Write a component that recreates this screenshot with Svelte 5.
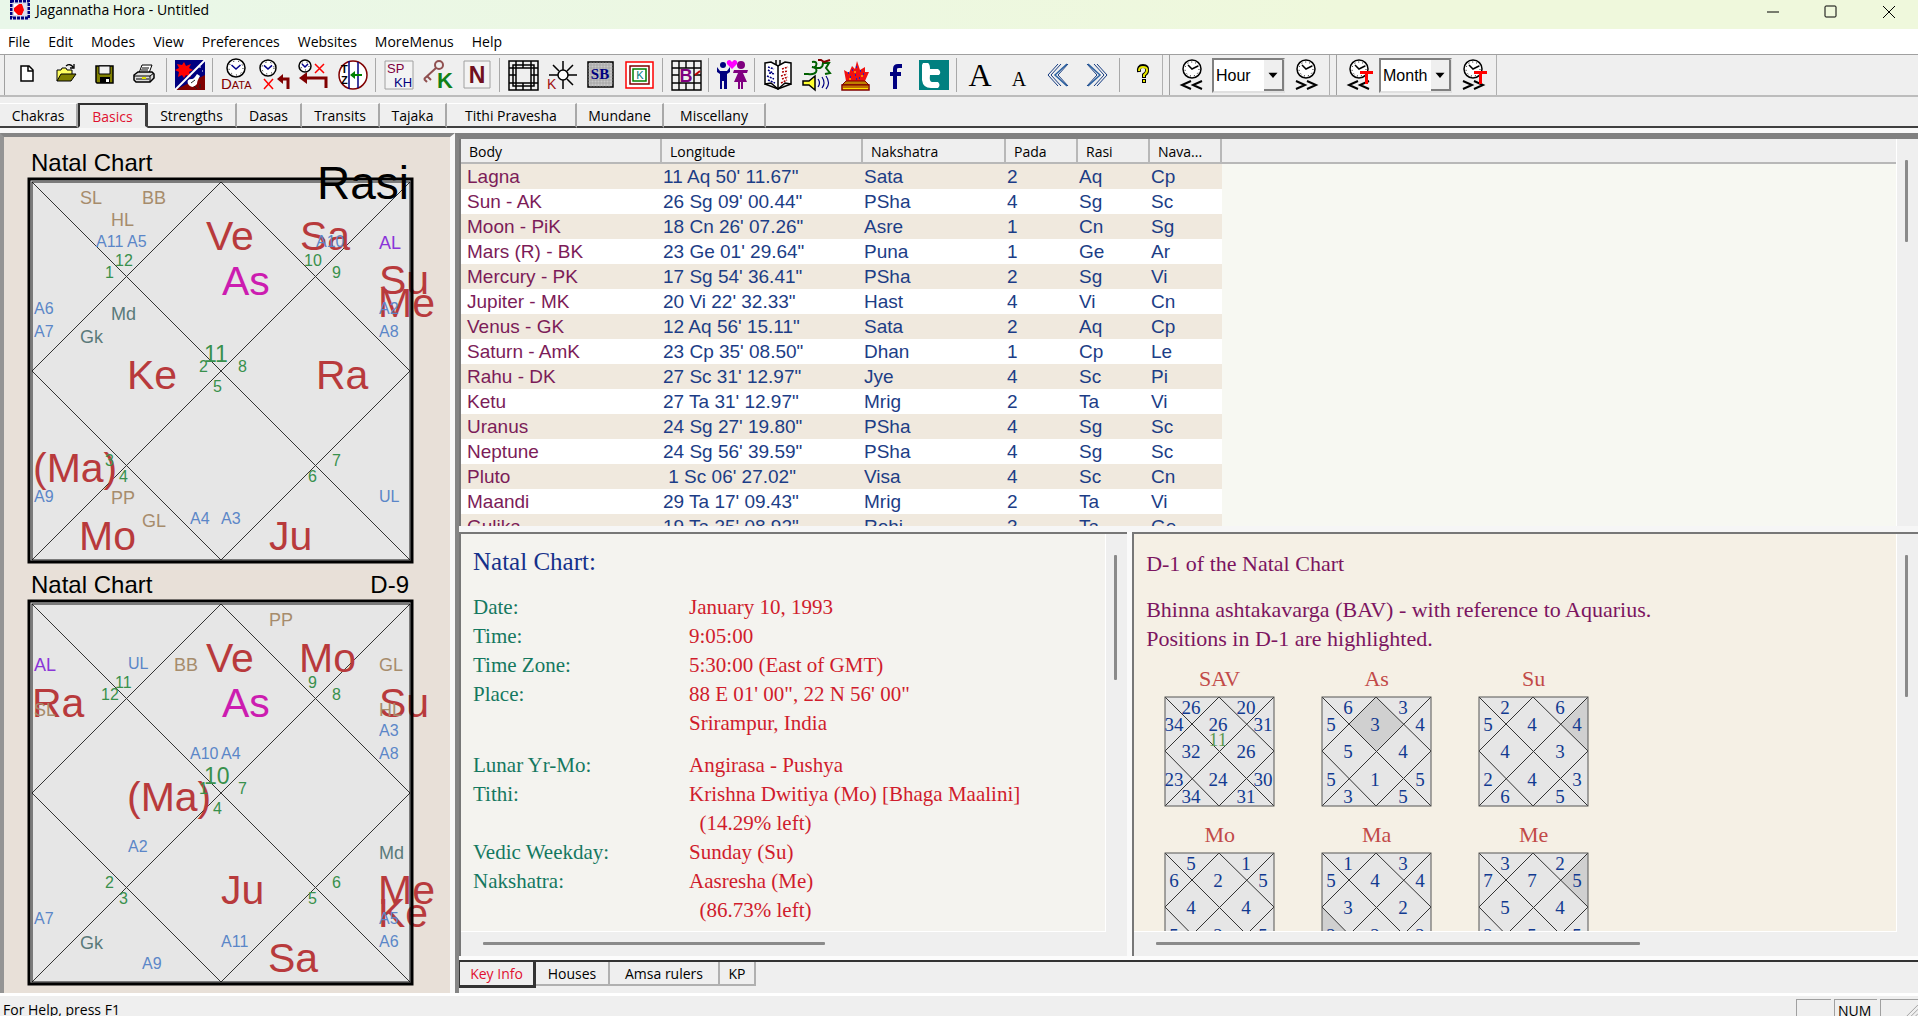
<script>
  const menus = ["File", "Edit", "Modes", "View", "Preferences", "Websites", "MoreMenus", "Help"];

  const toolGroups = [
    ["new", "open", "save", "print"],
    ["panchang"],
    ["data", "clock-undo", "clock-back", "timezone"],
    ["spkh", "key", "news"],
    ["grid", "sunk", "sb", "kota"],
    ["bcell"],
    ["couple"],
    ["book", "mantra", "homa", "facebook", "twitter"],
    ["bigger", "smaller", "prev", "next"],
    ["help"],
  ];

  const steppers = [
    { unit: "Hour", transit: false },
    { unit: "Month", transit: true },
  ];

  const tabs = [
    { name: "Chakras", width: 78 },
    { name: "Basics", width: 70 },
    { name: "Strengths", width: 89 },
    { name: "Dasas", width: 65 },
    { name: "Transits", width: 78 },
    { name: "Tajaka", width: 67 },
    { name: "Tithi Pravesha", width: 130 },
    { name: "Mundane", width: 87 },
    { name: "Miscellany", width: 102 },
  ];
  let activeTab = $state("Basics");

  const infoTabs = [
    { name: "Key Info", width: 77 },
    { name: "Houses", width: 74 },
    { name: "Amsa rulers", width: 110 },
    { name: "KP", width: 36 },
  ];
  let activeInfo = $state("Key Info");

  // kinds: p planet, s special lagna, a arudha, u upagraha, al, as, n house number, c centre number
  const rasi = {
    title: "Natal Chart",
    label: "Rasi",
    marks: [
      ["s", "SL", 52, 26], ["s", "BB", 114, 26], ["s", "HL", 83, 48],
      ["u", "Md", 83, 142], ["u", "Gk", 52, 165],
      ["s", "PP", 83, 326], ["s", "GL", 114, 349], ["al", "AL", 351, 71],
      ["p", "Ve", 178, 72], ["as", "As", 194, 117], ["p", "Sa", 272, 72],
      ["p", "Su", 351, 116], ["p", "Me", 350, 139],
      ["p", "Ke", 99, 211], ["p", "Ra", 288, 211],
      ["p", "(Ma)", 5, 304], ["p", "Mo", 51, 372], ["p", "Ju", 241, 372],
      ["a", "A11", 68, 69], ["a", "A5", 99, 69], ["a", "A10", 288, 69],
      ["a", "A6", 6, 136], ["a", "A7", 6, 159], ["a", "A2", 351, 136], ["a", "A8", 351, 159],
      ["a", "A9", 6, 324], ["a", "A4", 162, 346], ["a", "A3", 193, 346], ["a", "UL", 351, 324],
      ["n", "12", 87, 88], ["n", "1", 77, 100], ["n", "10", 276, 88], ["n", "9", 304, 100],
      ["n", "2", 171, 194], ["c", "11", 176, 184], ["n", "8", 210, 194], ["n", "5", 185, 214],
      ["n", "3", 77, 288], ["n", "4", 91, 304], ["n", "6", 280, 304], ["n", "7", 304, 288],
    ],
  };

  const navamsa = {
    title: "Natal Chart",
    label: "D-9",
    marks: [
      ["s", "PP", 241, 26], ["s", "BB", 146, 71], ["s", "GL", 351, 71],
      ["al", "AL", 6, 71], ["u", "Md", 351, 259], ["u", "Gk", 52, 349],
      ["p", "Ve", 178, 72], ["as", "As", 194, 117], ["p", "Mo", 271, 72],
      ["p", "Ra", 4, 117], ["p", "Su", 351, 117], ["s", "SL", 6, 116], ["s", "HL", 351, 116],
      ["p", "(Ma)", 99, 211], ["p", "Ju", 193, 304], ["p", "Me", 350, 304],
      ["p", "Ke", 350, 327], ["p", "Sa", 240, 372],
      ["a", "UL", 100, 69], ["a", "A3", 351, 136], ["a", "A8", 351, 159],
      ["a", "A10", 162, 159], ["a", "A4", 193, 159], ["a", "A2", 100, 252],
      ["a", "A5", 351, 324], ["a", "A6", 351, 347], ["a", "A7", 6, 324],
      ["a", "A11", 193, 347], ["a", "A9", 114, 369],
      ["n", "12", 73, 100], ["n", "11", 87, 88], ["n", "9", 280, 88], ["n", "8", 304, 100],
      ["n", "1", 171, 194], ["c", "10", 176, 184], ["n", "7", 210, 194], ["n", "4", 185, 214],
      ["n", "2", 77, 288], ["n", "3", 91, 304], ["n", "5", 280, 304], ["n", "6", 304, 288],
    ],
  };

  const columns = ["Body", "Longitude", "Nakshatra", "Pada", "Rasi", "Nava..."];
  const bodies = [
    ["Lagna", "11 Aq 50' 11.67\"", "Sata", "2", "Aq", "Cp"],
    ["Sun - AK", "26 Sg 09' 00.44\"", "PSha", "4", "Sg", "Sc"],
    ["Moon - PiK", "18 Cn 26' 07.26\"", "Asre", "1", "Cn", "Sg"],
    ["Mars (R) - BK", "23 Ge 01' 29.64\"", "Puna", "1", "Ge", "Ar"],
    ["Mercury - PK", "17 Sg 54' 36.41\"", "PSha", "2", "Sg", "Vi"],
    ["Jupiter - MK", "20 Vi 22' 32.33\"", "Hast", "4", "Vi", "Cn"],
    ["Venus - GK", "12 Aq 56' 15.11\"", "Sata", "2", "Aq", "Cp"],
    ["Saturn - AmK", "23 Cp 35' 08.50\"", "Dhan", "1", "Cp", "Le"],
    ["Rahu - DK", "27 Sc 31' 12.97\"", "Jye", "4", "Sc", "Pi"],
    ["Ketu", "27 Ta 31' 12.97\"", "Mrig", "2", "Ta", "Vi"],
    ["Uranus", "24 Sg 27' 19.80\"", "PSha", "4", "Sg", "Sc"],
    ["Neptune", "24 Sg 56' 39.59\"", "PSha", "4", "Sg", "Sc"],
    ["Pluto", " 1 Sc 06' 27.02\"", "Visa", "4", "Sc", "Cn"],
    ["Maandi", "29 Ta 17' 09.43\"", "Mrig", "2", "Ta", "Vi"],
    ["Gulika", "19 Ta 35' 08.92\"", "Rohi", "3", "Ta", "Ge"],
  ];

  const birth = [
    ["Date:", "January 10, 1993"],
    ["Time:", "9:05:00"],
    ["Time Zone:", "5:30:00 (East of GMT)"],
    ["Place:", "88 E 01' 00\", 22 N 56' 00\""],
    ["", "Srirampur, India"],
  ];
  const panchanga = [
    ["Lunar Yr-Mo:", "Angirasa - Pushya"],
    ["Tithi:", "Krishna Dwitiya (Mo) [Bhaga Maalini]"],
    ["", "  (14.29% left)"],
    ["Vedic Weekday:", "Sunday (Su)"],
    ["Nakshatra:", "Aasresha (Me)"],
    ["", "  (86.73% left)"],
    ["Yoga:", "Priti (Me) (33.41% left)"],
  ];

  // centre points of the twelve houses in a 111px box, first house on top, then anticlockwise
  const houseSpots = [
    [54, 28], [27, 11], [10, 28], [27, 55], [10, 83], [27, 100],
    [54, 83], [82, 100], [99, 83], [82, 55], [99, 28], [82, 11],
  ];
  const houseShapes = {
    1: "55,1 83,28 55,55 28,28",
    5: "1,55 28,83 1,110",
    11: "110,1 110,55 83,28",
  };
  const vargas = [
    { name: "SAV", values: [26, 26, 34, 32, 23, 34, 24, 31, 30, 26, 31, 20], sign: 11 },
    { name: "As", values: [3, 6, 5, 5, 5, 3, 1, 5, 5, 4, 4, 3], lit: 1 },
    { name: "Su", values: [4, 2, 5, 4, 2, 6, 4, 5, 3, 3, 4, 6], lit: 11 },
    { name: "Mo", values: [2, 5, 6, 4, 5, 4, 2, 4, 5, 4, 5, 1] },
    { name: "Ma", values: [4, 1, 5, 3, 2, 4, 2, 3, 2, 2, 4, 3], lit: 5 },
    { name: "Me", values: [7, 3, 7, 5, 2, 5, 5, 4, 5, 4, 5, 2], lit: 11 },
  ];
</script>

{#snippet clock(cx, cy, r)}
  <circle {cx} {cy} {r} fill="#fff" stroke="#000" stroke-width="1.5" />
  <circle {cx} {cy} r={r - 2} fill="none" stroke="#000" stroke-width="1" stroke-dasharray="1 4" />
  <path d="M{cx - r / 2} {cy - r / 3}L{cx} {cy + 1}L{cx + r / 2} {cy - r / 3}" fill="none" stroke="#00008b" stroke-width="1.5" />
{/snippet}

{#snippet icon(name)}
  <svg class="icon" viewBox="0 0 32 32" aria-hidden="true">
    {#if name === "new"}
      <path d="M10 7h8l4 4v11H10z" fill="#fff" stroke="#000" stroke-width="1.5" />
      <path d="M17 7v5h5" fill="none" stroke="#000" stroke-width="1.5" />
    {:else if name === "open"}
      <path d="M7 22V11h4l1-2h4l1 2h5v4" fill="#ffff60" stroke="#000" />
      <path d="M7 22l4-7h15l-5 7z" fill="#808000" stroke="#000" />
      <path d="M16 7q4-3 7 1M24 5v4h-4" fill="none" stroke="#000" stroke-width="1.3" />
    {:else if name === "save"}
      <path d="M7 7h17v17H8l-1-1z" fill="#808000" stroke="#000" stroke-width="1.5" />
      <path d="M10 7h11v8H10z" fill="#f0f0f0" stroke="#000" />
      <path d="M11 18h10v6H11z" fill="#000" />
      <path d="M17 20h3v3h-3z" fill="#fff" />
    {:else if name === "print"}
      <path d="M11 14l3-8h10l-3 8z" fill="#fff" stroke="#000" />
      <path d="M14 9h7M13 11h7" stroke="#000" />
      <path d="M6 16l4-3h14l2 2v4l-4 4H8l-2-2z" fill="#ddd" stroke="#000" stroke-width="1.5" />
      <path d="M6 17h16l4-3M8 20h13M22 17v6" fill="none" stroke="#000" />
      <path d="M14 18h4v2h-4z" fill="#e0e000" />
    {:else if name === "panchang"}
      <path d="M1 1h30v30H1z" fill="#000080" />
      <path d="M1 31L31 16v15z" fill="#800000" />
      <path d="M10 3l2 4 5-2-2 4 4 2-4 2 2 5-5-2-2 3-2-3-4 2 1-5-4-2 4-2-2-4 5 1z" fill="#f00" />
      <path d="M1 31L31 1" stroke="#fff" stroke-width="2" />
      <path d="M14 25q-2-5 4-5 2 0 5-5l3 2q-3 5-3 8-5 6-9 0z" fill="#fff" />
      <path d="M17 24l4-3M20 27l3 3M26 25v4" stroke="#222" />
      <path d="M25 8h2M28 12h1M27 5h1" stroke="#fff" />
    {:else if name === "data"}
      {@render clock(16, 9, 9)}
      <text x="1" y="30" class="t-data">D<tspan class="t-caps">ATA</tspan></text>
    {:else if name === "clock-undo"}
      {@render clock(9, 9, 8)}
      <path d="M5 20l9 10M14 20l-9 10" stroke="#f00" stroke-width="1.5" />
      <path d="M29 30V20h-8" fill="none" stroke="#800000" stroke-width="3" />
      <path d="M18 20l6-5v10z" fill="#800000" />
    {:else if name === "clock-back"}
      {@render clock(7, 7, 6)}
      <path d="M17 5l9 9M26 5l-9 9" stroke="#f00" stroke-width="1.5" />
      <path d="M28 29V19H8" fill="none" stroke="#800000" stroke-width="3" />
      <path d="M1 19l8-6v12z" fill="#800000" />
    {:else if name === "timezone"}
      <circle cx="16" cy="16" r="14" fill="#fff" stroke="#800000" stroke-width="1.5" />
      <path d="M12 2v28M21 3v26" stroke="#000080" stroke-width="1.5" />
      <path d="M14 16h11" stroke="#008000" stroke-width="2" />
      <path d="M13 16l5-4v8z" fill="#008000" />
      <text x="4" y="14" class="t-tz">T</text>
      <text x="4" y="25" class="t-tz">Z</text>
    {:else if name === "spkh"}
      <path d="M2 2h28v28H2z" fill="#f3f3f3" stroke="#a0a0a0" />
      <text x="4" y="14" class="t-sp maroon">SP</text>
      <text x="11" y="28" class="t-sp navy">KH</text>
    {:else if name === "key"}
      <circle cx="17" cy="6" r="4" fill="none" stroke="#905050" stroke-width="2" />
      <path d="M14 9L2 20M5 17l4 4M2 20l3 3" fill="none" stroke="#905050" stroke-width="2" />
      <text x="15" y="29" class="t-k">K</text>
    {:else if name === "news"}
      <path d="M3 2h26v27H3z" fill="#f3f3f3" stroke="#a0a0a0" />
      <text x="16" y="24" class="t-n">N</text>
    {:else if name === "grid"}
      <path d="M2 2h29v29H2zM6 6h21v21H6zM9 9h15v15H9zM9 2v7M16 2v7M24 2v7M9 24v7M16 24v7M24 24v7M2 9h7M2 16h7M2 24h7M24 9h7M24 16h7M24 24h7" fill="none" stroke="#000" stroke-width="1.5" />
    {:else if name === "sunk"}
      <circle cx="17" cy="16" r="5" fill="#fff" stroke="#000" stroke-width="1.5" />
      <path d="M17 2v9M17 21v9M3 16h9M22 16h9M7 6l6 6M27 6l-6 6M21 20l6 6" stroke="#000" stroke-width="1.5" />
      <text x="1" y="30" class="t-sk">K</text>
    {:else if name === "sb"}
      <path d="M3 3h25v25H3z" fill="#c8c8c8" stroke="#000" stroke-width="1.5" />
      <path d="M6 3v25M9 3v25M12 3v25M15 3v25M18 3v25M21 3v25M24 3v25M3 6h25M3 9h25M3 12h25M3 15h25M3 18h25M3 21h25M3 24h25" stroke="#999" stroke-width="0.6" />
      <text x="15" y="20" class="t-sb">SB</text>
    {:else if name === "kota"}
      <path d="M2 3h27v26H2z" fill="#fff" stroke="#f00" stroke-width="1.5" />
      <path d="M6 7h19v18H6z" fill="none" stroke="#800000" stroke-width="1.5" />
      <path d="M9 10h13v12H9z" fill="none" stroke="#008000" stroke-width="1.5" />
      <text x="16" y="20" class="t-ko">K</text>
    {:else if name === "bcell"}
      <path d="M2 2h29v29H2zM9 2v29M24 2v29M2 9h29M2 24h29M16 2v7M16 24v7M2 16h7M24 16h7" fill="none" stroke="#000" stroke-width="1.4" />
      <path d="M25 16l5-4" stroke="#c00000" stroke-width="2" />
      <text x="16" y="23" class="t-b">B</text>
    {:else if name === "couple"}
      <circle cx="7" cy="6" r="3" fill="#000080" />
      <path d="M1 8l3 4h7l3-4v5l-3 2v15H8v-8H6v8H4V15l-3-2z" fill="#000080" />
      <circle cx="25" cy="6" r="4" fill="#800080" />
      <path d="M18 11h14l-1 3-4 0 4 9h-4v7h-2v-7h-1v7h-2v-7h-4l4-9-5 0z" fill="#800080" />
      <path d="M16 10l-5-5q-1-4 3-4l2 2 2-2q4 0 3 4z" fill="#f0f" />
    {:else if name === "book"}
      <path d="M3 4l6-1 7 4 7-4 6 1v21l-6-1-7 6-7-6-6 1z" fill="#fff" stroke="#000" stroke-width="1.5" />
      <path d="M16 7v23M14 1v5M18 1v5M3 25l13 5 13-5" fill="none" stroke="#000" stroke-width="1.5" />
      <path d="M6 8l6 2M6 11l5 3M7 14l6 1M5 17l7 3M6 21l7 3" stroke="#000080" stroke-width="1.5" stroke-dasharray="2 1" />
      <path d="M20 10l6-2M20 13l6-1M19 17l6-2M20 20l6-2M19 24l6-3" stroke="#b00000" stroke-width="1.5" stroke-dasharray="2 1" />
    {:else if name === "mantra"}
      <path d="M11 3q6-1 4 4-1 2-4 1 6 1 4 5-2 3-8 2H3M15 9h4q3-1 3-5h6l-3 5 4 5-5 1" fill="none" stroke="#006000" stroke-width="2" />
      <path d="M17 1h3l3 2 6-2" fill="none" stroke="#800000" stroke-width="2" />
      <path d="M2 22h6l6-5v14l-6-5H2z" fill="#ffff30" stroke="#000" stroke-width="1.5" />
      <path d="M17 20q3 4 0 8M21 18q4 6 0 11M25 17q5 7 0 13" fill="none" stroke="#000080" stroke-width="1.2" />
    {:else if name === "homa"}
      <path d="M6 22L4 11l5 3 3-7 3 3 2-8 3 9 5-3v5l4 0-4 9z" fill="#f01010" />
      <path d="M8 14h1M12 11h1M16 8h1M20 12h1M10 18h1M15 16h1M19 19h1M23 15h1M16 20h1" stroke="#2020c0" stroke-width="2" />
      <path d="M9 20h2M14 13h2M21 17h2" stroke="#ff0" />
      <path d="M6 22h19l4 4H2z" fill="#c08000" stroke="#800000" />
      <path d="M2 26h27v5H2z" fill="#ffe000" stroke="#800000" stroke-width="1.5" />
      <path d="M3 28h25" stroke="#800000" />
    {:else if name === "facebook"}
      <path d="M23 5h-4q-5 0-5 5v3h-3v4h3v13h4V17h4v-4h-4v-3q0-1 2-1h3z" fill="#000080" />
    {:else if name === "twitter"}
      <path d="M1 1h30v30H1z" fill="#008080" />
      <path d="M5 4h5q2 1 2 6h8q4 3 1 6h-9q-1 7 2 7h6q3 3 0 6h-7q-8 0-9-8V6z" fill="#fff" />
    {:else if name === "bigger"}
      <text x="16" y="27" class="t-big">A</text>
    {:else if name === "smaller"}
      <text x="16" y="27" class="t-small">A</text>
    {:else if name === "prev"}
      <path d="M16 5L6 16l10 11M26 5L16 16l10 11M19 5L9 16l10 11" fill="none" stroke="#143a80" stroke-width="1" />
      <path d="M25 5L13 16l12 11" fill="none" stroke="#2a60a0" stroke-width="1.5" />
    {:else if name === "next"}
      <path d="M6 5l10 11L6 27M16 5l10 11-10 11M13 5l10 11-10 11" fill="none" stroke="#143a80" stroke-width="1" />
      <path d="M7 5l12 11L7 27" fill="none" stroke="#2a60a0" stroke-width="1.5" />
    {:else if name === "help"}
      <path d="M12 13q-1-6 4-6t4 5q0 2-3 4v3" fill="none" stroke="#000" stroke-width="4" />
      <path d="M12 12q0-4 4-4t4 3q0 3-3 5v2" fill="none" stroke="#e8e800" stroke-width="2" />
      <path d="M15 20h4v4h-4z" fill="#000" />
      <path d="M16 21h2v2h-2z" fill="#e8e800" />
    {/if}
  </svg>
{/snippet}

{#snippet stepIcon(forward, transit)}
  <svg class="icon" viewBox="0 0 32 32" aria-hidden="true">
    <circle cx="15" cy="10" r="9" fill="#fff" stroke="#000" stroke-width="1.5" />
    <circle cx="15" cy="10" r="7" fill="none" stroke="#000" stroke-dasharray="1 3" />
    <path d="M11 6l4 4 6-3" fill="none" stroke="#000" stroke-width="1.5" />
    {#if forward}
      <path d="M5 22l9 4-9 4M16 22l9 4-9 4" fill="none" stroke="#000" stroke-width="2" />
    {:else}
      <path d="M14 22l-9 4 9 4M25 22l-9 4 9 4" fill="none" stroke="#000" stroke-width="2" />
    {/if}
    {#if transit}
      <path d="M16 12h13v3h-5v10h-3V15h-5z" fill="#f00" />
    {/if}
  </svg>
{/snippet}

{#snippet northChart(chart)}
  <figure class="chart">
    <figcaption>{chart.title}</figcaption>
    <svg viewBox="0 0 386 386">
      <rect x="1" y="1" width="384" height="384" fill="#e6e6e6" />
      <path class="thin" d="M4 4L382 382M382 4L4 382M193 4L382 193L193 382L4 193Z" />
      {#each chart.marks as [kind, text, x, y]}
        <text {x} {y} class="mark {kind}">{text}</text>
      {/each}
      <rect class="outer" x="1" y="1" width="383" height="383" />
      <rect class="inner" x="4" y="4" width="378" height="378" />
      {#if chart.label === "Rasi"}
        <text class="division large" x="381" y="21">{chart.label}</text>
      {:else}
        <text class="division" x="381" y="-7">{chart.label}</text>
      {/if}
    </svg>
  </figure>
{/snippet}

<div class="app">
  <header class="titlebar">
    <svg class="logo" viewBox="0 0 20 20" aria-hidden="true">
      <path d="M0 0h20v20H0z" fill="#d8d8e8" />
      <path d="M1 1h18v17H1z" fill="none" stroke="#000080" stroke-width="3" stroke-dasharray="3 1" />
      <path d="M4 4h12v11H4z" fill="#fff" />
      <path d="M4 8l5-4h3l3 5-3 6H8l-4-4z" fill="#f00" />
      <path d="M12 4h4v11h-4l2-5z" fill="#dde" />
    </svg>
    <span class="app-name">Jagannatha Hora - Untitled</span>
    <div class="window-buttons">
      <button aria-label="Minimize"><svg viewBox="0 0 14 14"><path d="M1 7h12" /></svg></button>
      <button aria-label="Maximize"><svg viewBox="0 0 14 14"><rect x="1" y="1" width="11" height="11" rx="1" /></svg></button>
      <button aria-label="Close"><svg viewBox="0 0 14 14"><path d="M1 1l12 12M13 1L1 13" /></svg></button>
    </div>
  </header>

  <nav class="menubar">
    {#each menus as menu}
      <button>{menu}</button>
    {/each}
  </nav>

  <div class="toolbar">
    <div class="band">
      {#each toolGroups as group, i}
        {#if i > 0}<span class="sep"></span>{/if}
        {#each group as name}
          <button class="tool" aria-label={name}>{@render icon(name)}</button>
        {/each}
      {/each}
    </div>
    {#each steppers as stepper}
      <div class="band stepper">
        <button class="tool back" aria-label="Back one {stepper.unit}">{@render stepIcon(false, stepper.transit)}</button>
        <label class="unit">
          <select aria-label="Step unit">
            <option>{stepper.unit}</option>
          </select>
          <svg class="drop" viewBox="0 0 20 30" aria-hidden="true"><path d="M5 13h10l-5 6z" /></svg>
        </label>
        <button class="tool forward" aria-label="Forward one {stepper.unit}">{@render stepIcon(true, stepper.transit)}</button>
      </div>
    {/each}
  </div>

  <div class="tabs" role="tablist">
    {#each tabs as tab}
      <button
        role="tab"
        class:active={activeTab === tab.name}
        aria-selected={activeTab === tab.name}
        style="width: {tab.width}px"
        onclick={() => (activeTab = tab.name)}>{tab.name}</button>
    {/each}
    <span class="rest"></span>
  </div>

  <main>
    <aside>
      {@render northChart(rasi)}
      {@render northChart(navamsa)}
    </aside>

    <div class="right">
      <section class="bodies">
        <div class="table-area">
          <table>
            <colgroup>
              <col class="c-body" /><col class="c-long" /><col class="c-nak" />
              <col class="c-small" /><col class="c-small" /><col class="c-small" /><col />
            </colgroup>
            <thead>
              <tr>
                {#each columns as column}<th>{column}</th>{/each}
                <th class="blank"></th>
              </tr>
            </thead>
            <tbody>
              {#each bodies as row}
                <tr>
                  {#each row as cell}<td>{cell}</td>{/each}
                  <td class="blank"></td>
                </tr>
              {/each}
            </tbody>
          </table>
        </div>
        <div class="vbar"><span class="v-short"></span></div>
      </section>

      <div class="lower">
        <section class="pane info">
          <div class="content">
            <h2>Natal Chart:</h2>
            {#each [birth, panchanga] as block}
              <dl>
                {#each block as [label, value]}
                  <dt>{label}</dt>
                  <dd>{value}</dd>
                {/each}
              </dl>
            {/each}
          </div>
          <div class="vbar"><span class="v-mid"></span></div>
          <div class="hbar"><span class="h-info"></span></div>
        </section>

        <section class="pane bav">
          <div class="content">
            <h2>D-1 of the Natal Chart</h2>
            <p>Bhinna ashtakavarga (BAV) - with reference to Aquarius.<br />Positions in D-1 are highlighted.</p>
            <div class="vargas">
              {#each vargas as varga}
                <figure>
                  <figcaption>{varga.name}</figcaption>
                  <svg viewBox="0 0 111 111">
                    <rect x="1" y="1" width="109" height="109" fill="#e6e6e6" />
                    {#if varga.lit}
                      <polygon points={houseShapes[varga.lit]} fill="#d0d0d0" />
                    {/if}
                    <path class="thin" d="M1 1L110 110M110 1L1 110M55 1L110 55L55 110L1 55Z" />
                    <rect class="box" x="1" y="1" width="109" height="109" />
                    {#if varga.sign}
                      <text class="sign" x="54" y="50">{varga.sign}</text>
                    {/if}
                    {#each varga.values as value, i}
                      <text x={houseSpots[i][0]} y={houseSpots[i][1] + 7}>{value}</text>
                    {/each}
                  </svg>
                </figure>
              {/each}
            </div>
          </div>
          <div class="vbar"><span class="v-long"></span></div>
          <div class="hbar"><span class="h-bav"></span></div>
        </section>
      </div>

      <div class="info-tabs" role="tablist">
        {#each infoTabs as tab}
          <button
            role="tab"
            class:active={activeInfo === tab.name}
            aria-selected={activeInfo === tab.name}
            style="width: {tab.width}px"
            onclick={() => (activeInfo = tab.name)}>{tab.name}</button>
        {/each}
      </div>
    </div>
  </main>

  <footer>
    <span class="hint">For Help, press F1</span>
    <span class="cell"></span>
    <span class="cell num">NUM</span>
    <span class="cell last">
      <svg viewBox="0 0 16 16" aria-hidden="true"><path d="M1 16L16 1M6 16L16 6M11 16l5-5" /></svg>
    </span>
  </footer>
</div>

<style>
  :global(body) {
    margin: 0;
    background: #efefef;
  }

  .app {
    height: 100vh;
    display: flex;
    flex-direction: column;
    overflow: hidden;
    background: #efefef;
    color: #000;
    font-family: "Open Sans", "Noto Sans", sans-serif;
    font-size: 14px;
  }

  button {
    font: inherit;
    color: inherit;
    background: none;
    border: 0;
    padding: 0;
  }

  h2,
  p,
  figure,
  dl,
  dd {
    margin: 0;
    font-weight: normal;
  }

  .titlebar {
    flex: none;
    height: 29px;
    display: flex;
    align-items: flex-start;
    background: linear-gradient(90deg, #e9f7e9, #eff8dc 70%);
  }

  .logo {
    width: 20px;
    height: 20px;
    margin-left: 10px;
  }

  .app-name {
    margin-left: 6px;
    line-height: 20px;
  }

  .window-buttons {
    margin-left: auto;
    display: flex;
  }

  .window-buttons button {
    width: 58px;
    height: 20px;
  }

  .window-buttons svg {
    width: 14px;
    height: 14px;
    display: block;
    margin: 3px auto 0;
    fill: none;
    stroke: #000;
  }

  .menubar {
    flex: none;
    height: 25px;
    display: flex;
    gap: 18px;
    padding-left: 8px;
    background: #fff;
  }

  .toolbar {
    flex: none;
    display: flex;
    height: 40px;
    border-top: 1px solid #a0a0a0;
    border-bottom: 2px solid #bcbcbc;
    background: #efefef;
  }

  .band {
    display: flex;
    align-items: center;
    padding-left: 3px;
    border-right: 1px solid #b0b0b0;
    margin-right: 5px;
  }

  .band::before {
    content: "";
    width: 1px;
    height: 100%;
    border-right: 1px solid #a0a0a0;
    margin-right: 2px;
  }

  .stepper {
    padding-left: 0;
  }

  .stepper::before {
    margin-right: 4px;
  }

  .tool {
    flex: none;
    width: 39px;
    height: 38px;
    display: flex;
    align-items: center;
    justify-content: center;
  }

  .back {
    width: 38px;
  }

  .forward {
    width: 44px;
  }

  .icon {
    flex: none;
    width: 32px;
    height: 32px;
    overflow: visible;
  }

  .sep {
    width: 1px;
    height: 34px;
    margin: 0 3px;
    background: #a8a8a8;
  }

  .icon text {
    font-family: "Liberation Sans", sans-serif;
  }

  .icon .t-data {
    font-size: 15px;
    fill: #800000;
  }

  .icon .t-caps {
    font-size: 11px;
  }

  .icon .t-tz {
    font-size: 11px;
    font-weight: bold;
  }

  .icon .t-sp {
    font-size: 13px;
  }

  .maroon {
    fill: #800040;
  }

  .navy {
    fill: #000080;
  }

  .icon .t-k {
    font-size: 22px;
    font-weight: bold;
    fill: #108018;
  }

  .icon .t-n {
    font-size: 23px;
    font-weight: bold;
    fill: #701020;
    text-anchor: middle;
  }

  .icon .t-sk {
    font-size: 14px;
    fill: #a01010;
  }

  .icon .t-sb {
    font-family: "Liberation Serif", serif;
    font-size: 15px;
    font-weight: bold;
    fill: #000080;
    text-anchor: middle;
  }

  .icon .t-ko {
    font-size: 11px;
    fill: #008080;
    text-anchor: middle;
  }

  .icon .t-b {
    font-size: 18px;
    font-weight: bold;
    fill: #800080;
    text-anchor: middle;
  }

  .icon .t-big {
    font-family: "Liberation Serif", serif;
    font-size: 32px;
    text-anchor: middle;
  }

  .icon .t-small {
    font-family: "Liberation Serif", serif;
    font-size: 20px;
    text-anchor: middle;
  }

  .unit {
    flex: none;
    position: relative;
    width: 73px;
    height: 35px;
  }

  .unit select {
    appearance: none;
    width: 100%;
    height: 100%;
    padding: 0 0 0 2px;
    box-sizing: border-box;
    border: 2px solid;
    border-color: #808080 #e0e0e0 #e0e0e0 #808080;
    border-radius: 0;
    background: #fff;
    color: #000;
    font: 16px "Liberation Sans", sans-serif;
  }

  .drop {
    position: absolute;
    top: 2px;
    right: 1px;
    width: 18px;
    height: 29px;
    background: #efefef;
    border-right: 2px solid #808080;
    border-bottom: 2px solid #808080;
    pointer-events: none;
  }

  .tabs {
    flex: none;
    height: 31px;
    display: flex;
    align-items: flex-end;
  }

  .tabs button {
    box-sizing: border-box;
    height: 25px;
    border-top: 1px solid #fff;
    border-right: 2px solid #a8a8a8;
    border-bottom: 2px solid #404040;
    line-height: 22px;
    padding-top: 1px;
  }

  .tabs .active {
    border-top: 2px solid #303030;
    border-left: 2px solid #303030;
    border-right: 3px solid #404040;
    border-bottom-color: #efefef;
    color: #e01030;
  }

  .tabs .rest {
    flex: 1;
    height: 2px;
    background: #404040;
  }

  main {
    flex: 1;
    min-height: 0;
    display: flex;
    border-top: 5px solid #f8f8f8;
    border-bottom: 3px solid #fff;
  }

  aside {
    flex: none;
    box-sizing: border-box;
    width: 455px;
    padding-left: 24px;
    border-top: 4px solid #858585;
    border-left: 4px solid #949494;
    border-right: 5px solid #f8f8f8;
    background: #e8e0d8;
  }

  .chart figcaption {
    padding: 6px 0 0 3px;
    line-height: 30px;
    font-family: "Liberation Sans", sans-serif;
    font-size: 24px;
  }

  .chart svg {
    display: block;
    width: 386px;
    height: 386px;
    overflow: visible;
  }

  .chart:first-child {
    padding-top: 5px;
  }

  .thin {
    fill: none;
    stroke: #333;
  }

  .outer {
    fill: none;
    stroke: #000;
    stroke-width: 3;
  }

  .inner {
    fill: none;
    stroke: #111;
    stroke-width: 1;
  }

  .chart text {
    font-family: "Liberation Sans", sans-serif;
  }

  .chart .p,
  .chart .as {
    font-size: 41px;
    fill: #b83a3c;
  }

  .chart .as {
    fill: #cc1cb0;
  }

  .s,
  .u,
  .al {
    font-size: 18px;
    fill: #a68c6c;
  }

  .u {
    fill: #5a7a7a;
  }

  .al {
    fill: #8a35d8;
  }

  .a {
    font-size: 16px;
    fill: #5b86c8;
  }

  .n {
    font-size: 16px;
    fill: #38904c;
  }

  .c {
    font-size: 23px;
    fill: #38904c;
  }

  .division {
    font-size: 24px;
    text-anchor: end;
  }

  .chart .large {
    font-size: 46px;
  }

  .right {
    flex: 1;
    min-width: 0;
    display: flex;
    flex-direction: column;
    border-top: 6px solid #808080;
    border-left: 4px solid #858585;
  }

  .bodies {
    flex: none;
    height: 387px;
    display: flex;
    border-left: 2px solid #777;
  }

  .table-area {
    flex: 1;
    overflow: hidden;
    background: #f7f8f2;
  }

  table {
    width: 100%;
    table-layout: fixed;
    border-collapse: separate;
    border-spacing: 0;
  }

  .c-body {
    width: 201px;
  }

  .c-long {
    width: 201px;
  }

  .c-nak {
    width: 143px;
  }

  .c-small {
    width: 72px;
  }

  th {
    box-sizing: border-box;
    height: 25px;
    padding: 1px 0 0 8px;
    text-align: left;
    font-weight: normal;
    line-height: 21px;
    background: #efefef;
    border-right: 2px solid #b8b8b8;
    border-bottom: 2px solid #b8b8b8;
  }

  th.blank {
    border-right: 0;
  }

  td {
    height: 25px;
    padding: 0 0 0 1px;
    font-family: "Liberation Sans", sans-serif;
    font-size: 19px;
    line-height: 25px;
    color: #1c3d86;
    white-space: pre;
    background: #fff;
  }

  td:first-child {
    padding-left: 6px;
    color: #7c1c58;
  }

  tbody tr:nth-child(odd) td {
    background: #f0e9de;
  }

  tbody tr td.blank {
    background: #f7f8f2;
  }

  .vbar {
    flex: none;
    box-sizing: border-box;
    width: 22px;
    border-left: 1px solid #fff;
    background: #efefef;
  }

  .vbar span {
    display: block;
    width: 3px;
    margin: 21px auto 0 8px;
    background: #8a8a8a;
    border-radius: 1px;
  }

  .v-short {
    height: 82px;
  }

  .v-mid {
    height: 125px;
  }

  .v-long {
    height: 142px;
  }

  .lower {
    flex: 1;
    min-height: 0;
    display: flex;
    gap: 5px;
    border-top: 6px solid #f6f6f6;
    border-bottom: 4px solid #fcfcfc;
    background: #fafafa;
  }

  .pane {
    box-sizing: border-box;
    display: grid;
    grid-template-columns: 1fr 22px;
    grid-template-rows: minmax(0, 1fr) 24px;
    border-top: 2px solid #777;
    border-left: 2px solid #777;
    background: #efefef;
  }

  .info {
    flex: 668 1 0;
  }

  .bav {
    flex: 786 1 0;
  }

  .content {
    overflow: hidden;
    font-family: "Liberation Serif", serif;
    white-space: nowrap;
    border-bottom: 1px solid #fff;
  }

  .hbar {
    grid-column: span 2;
  }

  .hbar span {
    display: block;
    height: 3px;
    margin: 10px 0 0 22px;
    background: #8a8a8a;
    border-radius: 1px;
  }

  .h-info {
    width: 342px;
  }

  .h-bav {
    width: 484px;
  }

  .info .content {
    padding: 13px 0 0 12px;
    background: #f4f3ef;
  }

  .info h2 {
    font-size: 25px;
    line-height: 29px;
    margin-bottom: 17px;
    color: #15308a;
  }

  dl {
    display: grid;
    grid-template-columns: 216px 1fr;
    grid-auto-rows: 29px;
    margin-bottom: 13px;
    font-size: 21px;
    line-height: 29px;
    white-space: pre;
  }

  dt {
    color: #14785f;
  }

  dd {
    color: #d01c2c;
  }

  .bav .content {
    padding: 15px 0 0 12px;
    background: #f5f0e5;
    font-size: 22px;
    line-height: 29px;
    color: #7c1560;
  }

  .bav h2 {
    font-size: 22px;
    margin-bottom: 17px;
  }

  .vargas {
    display: grid;
    grid-template-columns: 157px 157px 157px;
    padding: 11px 0 0 18px;
  }

  .vargas figure {
    width: 111px;
    height: 156px;
  }

  .vargas figcaption {
    text-align: center;
    color: #c24a48;
  }

  .vargas svg {
    display: block;
    width: 111px;
    height: 111px;
    margin-top: 3px;
  }

  .vargas text {
    font-size: 19px;
    text-anchor: middle;
    fill: #123a90;
  }

  .vargas .sign {
    fill: #5c9a50;
  }

  .box {
    fill: none;
    stroke: #555;
  }

  .info-tabs {
    flex: none;
    height: 31px;
    display: flex;
    align-items: flex-start;
    border-top: 2px solid #333;
  }

  .info-tabs button {
    box-sizing: border-box;
    height: 24px;
    border-right: 2px solid #b0b0b0;
    border-bottom: 2px solid #b0b0b0;
    line-height: 24px;
  }

  .info-tabs .active {
    height: 26px;
    border-right: 3px solid #333;
    border-bottom: 3px solid #333;
    border-left: 1px solid #333;
    color: #e01030;
  }

  footer {
    flex: none;
    height: 20px;
    display: flex;
    gap: 3px;
    overflow: hidden;
    background: #efefef;
  }

  .hint {
    flex: 1;
    padding-left: 3px;
    line-height: 27px;
  }

  .cell {
    box-sizing: border-box;
    width: 35px;
    height: 24px;
    margin-top: 3px;
    border-top: 1px solid #a0a0a0;
    border-left: 1px solid #a0a0a0;
  }

  .num {
    width: 43px;
    padding-left: 3px;
    line-height: 21px;
  }

  .last {
    width: 38px;
    text-align: right;
  }

  .last svg {
    width: 14px;
    height: 14px;
    margin-top: 4px;
    stroke: #999;
  }
</style>
